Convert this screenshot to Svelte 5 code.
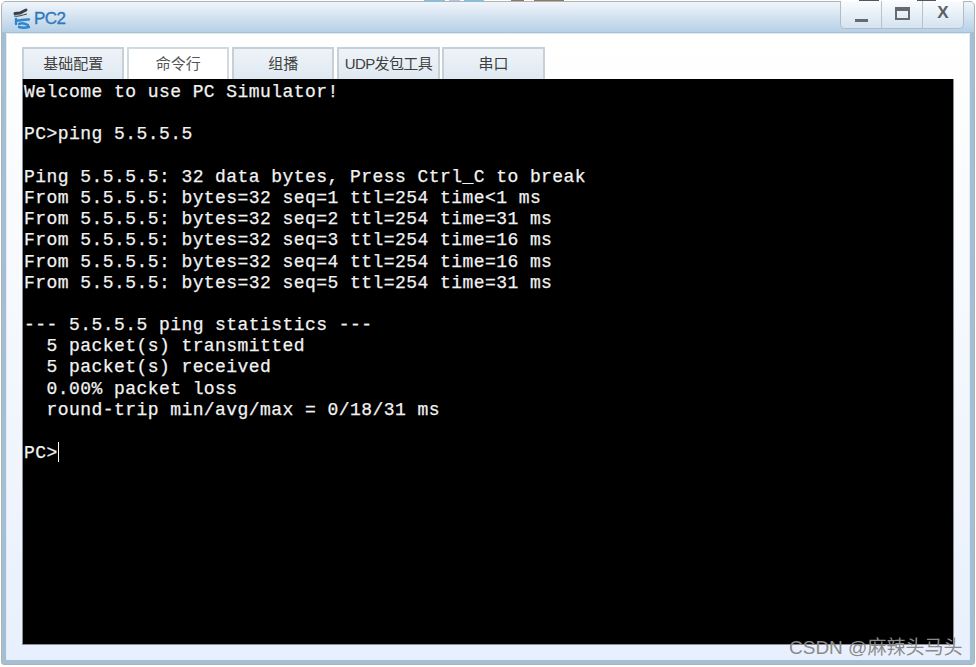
<script>
  const tabs = [
    { label: '基础配置', active: false },
    { label: '命令行', active: true },
    { label: '组播', active: false },
    { label: 'UDP发包工具', active: false, small: true },
    { label: '串口', active: false }
  ];
  const lines = [
    'Welcome to use PC Simulator!',
    '',
    'PC>ping 5.5.5.5',
    '',
    'Ping 5.5.5.5: 32 data bytes, Press Ctrl_C to break',
    'From 5.5.5.5: bytes=32 seq=1 ttl=254 time<1 ms',
    'From 5.5.5.5: bytes=32 seq=2 ttl=254 time=31 ms',
    'From 5.5.5.5: bytes=32 seq=3 ttl=254 time=16 ms',
    'From 5.5.5.5: bytes=32 seq=4 ttl=254 time=16 ms',
    'From 5.5.5.5: bytes=32 seq=5 ttl=254 time=31 ms',
    '',
    '--- 5.5.5.5 ping statistics ---',
    '  5 packet(s) transmitted',
    '  5 packet(s) received',
    '  0.00% packet loss',
    '  round-trip min/avg/max = 0/18/31 ms',
    ''
  ];
</script>

<div class="page">
  <div class="behind"></div>
  <div class="window">
    <header class="titlebar">
      <svg class="logo" width="18" height="24" viewBox="0 0 18 24" aria-hidden="true">
        <path d="M2 6.5 L7 6 L13 3" stroke="#3b3f44" stroke-width="3" fill="none" stroke-linecap="round" />
        <path d="M1 9 C5 10 9 8 14 7" stroke="#3b3f44" stroke-width="1" fill="none" />
        <path d="M3 12 L3 17 M3 13.5 C7 14 11 12 16 12.5 M6 17 C8 16 11 16 15 18 M6 20 C9 21 12 21 16 20" stroke="#2f86d0" stroke-width="2.4" fill="none" stroke-linecap="round" />
      </svg>
      <span class="title">PC2</span>
      <div class="controls">
        <button class="ctl" aria-label="最小化"><span class="min"></span></button>
        <button class="ctl" aria-label="最大化"><span class="max"></span></button>
        <button class="ctl close">X</button>
      </div>
    </header>
    <div class="panel">
      <nav class="tabs">
        {#each tabs as t}
          <div class="tab" class:active={t.active} class:small={t.small}>{t.label}</div>
        {/each}
      </nav>
      <div class="terminal">
        {#each lines as l}
          <div class="line">{l}</div>
        {/each}
        <div class="line">PC&gt;<span class="caret"></span></div>
      </div>
    </div>
  </div>
  <div class="mark">CSDN @麻辣头马头</div>
</div>

<style>
  :global(body) { margin: 0; background: #fff; }
  .page {
    position: relative;
    width: 976px;
    height: 667px;
    overflow: hidden;
    padding: 1px 1px 2px 1px;
    box-sizing: border-box;
    font-family: "Liberation Sans", "Noto Sans CJK SC", sans-serif;
  }
  .behind {
    position: absolute;
    left: 0;
    top: 0;
    width: 976px;
    height: 1px;
    background: linear-gradient(90deg,
      #fff 424px, #6fc8ef 424px, #6fc8ef 445px, #fff 445px,
      #fff 449px, #b0c8e8 449px, #b0c8e8 460px, #fff 460px,
      #fff 464px, #6fc8ef 464px, #6fc8ef 484px, #fff 484px,
      #fff 511px, #8a7a60 511px, #8a7a60 524px, #fff 524px,
      #fff 534px, #8a7a60 534px, #8a7a60 564px, #fff 564px,
      #fff 859px, #55555f 859px, #55555f 879px, #fff 879px,
      #fff 917px, #55555f 917px, #55555f 936px, #fff 936px);
  }
  .window {
    position: relative;
    height: 100%;
    box-sizing: border-box;
    border: 1px solid #b0b2b4;
    border-radius: 5px 5px 3px 3px;
    background: #a3bfd3;
    display: flex;
    flex-direction: column;
    padding: 0 4px 4px;
  }
  .titlebar {
    height: 30px;
    margin: 0 -4px;
    padding-left: 11px;
    display: flex;
    align-items: center;
    flex: none;
    background: linear-gradient(#f1f5fb, #b6d0e6);
    border-radius: 4px 4px 0 0;
    border-bottom: 1px solid #a6c0d4;
    position: relative;
  }
  .logo { flex: none; margin-top: 3px; }
  .title {
    margin-left: 3px;
    margin-top: 4px;
    font-size: 17px;
    color: #2f78bb;
    -webkit-text-stroke: 0.35px #2f78bb;
    letter-spacing: -0.6px;
  }
  .controls {
    position: absolute;
    top: -1px;
    right: 10px;
    width: 124px;
    height: 28px;
    box-sizing: border-box;
    display: flex;
    border: 1px solid #b3bcc4;
    border-top: none;
    border-radius: 0 0 5px 5px;
    background: linear-gradient(#fafcfe, #d4e3f0);
  }
  .ctl {
    flex: 1;
    padding: 0;
    border: none;
    background: none;
    border-left: 1px solid #b8c2ca;
    display: flex;
    align-items: center;
    justify-content: center;
    font: 700 17px "Liberation Sans", sans-serif;
    color: #5c6064;
  }
  .ctl:first-child { border-left: none; }
  .min {
    width: 13px;
    height: 3px;
    background: #66696d;
    margin-top: 11px;
  }
  .max {
    width: 11px;
    height: 7px;
    border: 2px solid #66696d;
    border-top-width: 4px;
    margin-bottom: 3px;
    display: block;
  }
  .close { padding-bottom: 4px; }
  .panel {
    flex: 1;
    min-height: 0;
    border: 1px solid #e3edf5;
    border-bottom: none;
    background: linear-gradient(#fff, #e9f0fd);
    padding: 13px 15px 15px 15px;
    display: flex;
    flex-direction: column;
  }
  .tabs {
    display: flex;
    gap: 2.8px;
    height: 32px;
    flex: none;
  }
  .tab {
    width: 102.3px;
    box-sizing: border-box;
    border: 2px solid #c5d0d9;
    border-bottom: none;
    background: linear-gradient(#eef3f8, #dfe9f2);
    display: flex;
    align-items: center;
    justify-content: center;
    font-size: 15px;
    color: #3f3f3f;
    white-space: nowrap;
    padding-bottom: 3px;
  }
  .tab.active { background: #fff; color: #555; border-color: #d2dae1; }
  .tab.small { letter-spacing: -0.6px; }
  .terminal {
    flex: 1;
    min-height: 0;
    background: #000;
    border: 1px solid #8c9096;
    border-top: none;
    padding: 3px 0 0 1px;
    color: #f2f2f2;
    font-family: "Liberation Mono", "Courier New", monospace;
    font-size: 18px;
    letter-spacing: 0.44px;
    -webkit-text-stroke: 0.25px #f2f2f2;
    line-height: 21.2px;
  }
  .line { height: 21.2px; white-space: pre; }
  .caret {
    display: inline-block;
    width: 1px;
    height: 20px;
    background: #fff;
    vertical-align: -4px;
  }
  .mark {
    position: absolute;
    left: 789px;
    top: 636px;
    font-size: 19px;
    line-height: 24px;
    color: #8b8b8b;
    white-space: nowrap;
  }
</style>
